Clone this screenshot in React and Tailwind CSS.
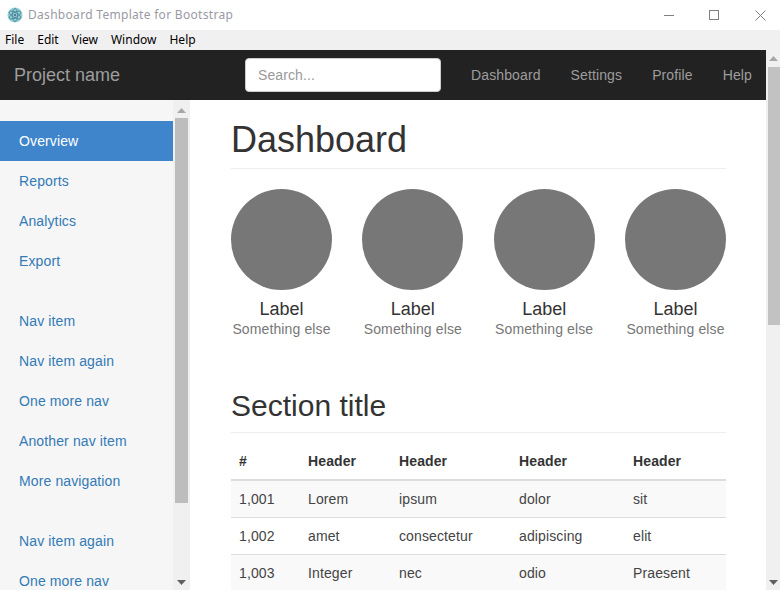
import React from 'react';

const navLinks = ['Dashboard', 'Settings', 'Profile', 'Help'];
const sideGroups = [
  ['Reports', 'Analytics', 'Export'],
  ['Nav item', 'Nav item again', 'One more nav', 'Another nav item', 'More navigation'],
  ['Nav item again', 'One more nav'],
];
const rows = [
  ['1,001', 'Lorem', 'ipsum', 'dolor', 'sit'],
  ['1,002', 'amet', 'consectetur', 'adipiscing', 'elit'],
  ['1,003', 'Integer', 'nec', 'odio', 'Praesent'],
];
const cols = ['w-[77px] pl-2', 'w-[91px]', 'w-[120px]', 'w-[114px]', 'flex-1'];
const font = { fontFamily: '"Liberation Sans", Arial, sans-serif' };

const AppIcon = () => (
  <svg width="16" height="16" viewBox="0 0 16 16" fill="none">
    <circle cx="8" cy="8" r="7.5" fill="#8fcfd6" />
    <ellipse cx="8" cy="8" rx="6.5" ry="2.6" stroke="#4d7f96" strokeWidth="0.8" transform="rotate(30 8 8)" />
    <ellipse cx="8" cy="8" rx="6.5" ry="2.6" stroke="#4d7f96" strokeWidth="0.8" transform="rotate(90 8 8)" />
    <ellipse cx="8" cy="8" rx="6.5" ry="2.6" stroke="#4d7f96" strokeWidth="0.8" transform="rotate(150 8 8)" />
    <circle cx="8" cy="8" r="1.2" fill="#4d7f96" />
  </svg>
);

// window buttons, 1px strokes on the pixel grid
const WinMin = () => (
  <svg width="10" height="10" viewBox="0 0 10 10" className="mr-[35px]">
    <path d="M0 5.5 H10" stroke="#808080" />
  </svg>
);
const WinMax = () => (
  <svg width="10" height="10" viewBox="0 0 10 10" className="mr-[36px]">
    <rect x="0.5" y="0.5" width="9" height="9" fill="none" stroke="#808080" />
  </svg>
);
const WinClose = () => (
  <svg width="11" height="11" viewBox="0 0 11 11" className="mr-[14px]">
    <path d="M0.5 0.5 L10.5 10.5 M10.5 0.5 L0.5 10.5" stroke="#808080" />
  </svg>
);

const Arrow = ({ up, className }) => (
  <svg width="9" height="5" viewBox="0 0 9 5" className={className}>
    <path d={up ? 'M0 5 L4.5 0 L9 5 Z' : 'M0 0 L9 0 L4.5 5 Z'} fill="currentColor" />
  </svg>
);

const Placeholder = () => (
  <div className="w-[101px] flex flex-col items-center">
    <div className="w-[101px] h-[101px] shrink-0 rounded-full bg-[#777777]" />
    <div className="mt-[7px] text-[18px] leading-[24px] text-[#333333]">Label</div>
    <div className="text-[14px] leading-[16px] tracking-[0.12px] whitespace-nowrap text-[#777777]">Something else</div>
  </div>
);

export default function App() {
  return (
    <div className="w-[780px] h-[590px] overflow-hidden flex flex-col bg-white" style={font}>
      {/* window title */}
      <div className="h-[30px] shrink-0 flex items-center pl-[7px] bg-white">
        <AppIcon />
        <span className="ml-[5px] text-[12px] tracking-[0.3px] text-[#9a9aa4]" style={{ fontFamily: '"Noto Sans", sans-serif' }}>
          Dashboard Template for Bootstrap
        </span>
        <div className="ml-auto flex items-center">
          <WinMin />
          <WinMax />
          <WinClose />
        </div>
      </div>

      {/* menu bar */}
      <div className="h-[20px] shrink-0 flex items-center gap-[13px] pl-[5px] bg-[#f0f0f0] text-[12px] text-black" style={{ fontFamily: '"Noto Sans", sans-serif' }}>
        {['File', 'Edit', 'View', 'Window', 'Help'].map((m) => (
          <span key={m}>{m}</span>
        ))}
      </div>

      <div className="flex-1 flex min-h-0">
        <div className="w-[766px] flex flex-col">
          {/* navbar */}
          <div className="h-[50px] shrink-0 bg-[#222222] flex items-center pl-[14px]">
            <span className="text-[18px] text-[#9d9d9d] w-[231px]">Project name</span>
            <div className="w-[196px] h-[34px] bg-white rounded border border-[#cccccc] flex items-center pl-3 text-[14px] tracking-[0.1px] text-[#999999]">
              Search...
            </div>
            <div className="flex ml-[30px] gap-[30px] text-[14px] tracking-[0.12px] text-[#9d9d9d]">
              {navLinks.map((l) => (
                <span key={l}>{l}</span>
              ))}
            </div>
          </div>

          <div className="flex-1 flex min-h-0">
            {/* sidebar */}
            <div className="w-[190px] shrink-0 flex bg-[#f6f6f6]">
              <div className="w-[173px] pt-[21px] text-[14px] tracking-[0.12px] text-[#337ab7] overflow-hidden">
                <div className="h-[40px] flex items-center pl-[19px] bg-[#3f85cb] text-white">Overview</div>
                {sideGroups.map((group, i) => (
                  <div key={i} className="mb-[20px]">
                    {group.map((item) => (
                      <div key={item} className="h-[40px] flex items-center pl-[19px]">{item}</div>
                    ))}
                  </div>
                ))}
              </div>
              <div className="w-[17px] bg-[#f0f0f0] flex flex-col items-center text-[#606060]">
                <Arrow up className="mt-[8px] text-[#a8a8a8]" />
                <div className="w-[13px] h-[385px] mt-[5px] bg-[#bdbdbd]" />
                <Arrow className="mt-auto mb-[5px]" />
              </div>
            </div>

            {/* main content */}
            <div className="flex-1 min-w-0 pl-[41px] pr-[40px] pt-[20px] overflow-hidden text-[#333333]">
              <h1 className="text-[36px] leading-[40px] pb-[8px] border-b border-[#eeeeee]">Dashboard</h1>
              <div className="flex justify-between mt-[20px]">
                <Placeholder />
                <Placeholder />
                <Placeholder />
                <Placeholder />
              </div>
              <h2 className="text-[30px] leading-[33px] mt-[52px] pb-[10px] border-b border-[#eeeeee]">Section title</h2>
              <div className="mt-[10px] text-[14px] tracking-[0.12px]">
                <div className="flex h-[38px] items-center font-bold border-b-2 border-[#dddddd]">
                  {['#', 'Header', 'Header', 'Header', 'Header'].map((h, i) => (
                    <div key={i} className={cols[i]}>{h}</div>
                  ))}
                </div>
                {rows.map((r, i) => (
                  <div key={i} className={`flex h-[37px] items-center border-b border-[#dddddd] text-[#444444] ${i % 2 === 0 ? 'bg-[#f9f9f9]' : 'bg-white'}`}>
                    {r.map((c, j) => (
                      <div key={j} className={cols[j]}>{c}</div>
                    ))}
                  </div>
                ))}
              </div>
            </div>
          </div>
        </div>

        {/* page scrollbar */}
        <div className="w-[14px] bg-[#f0f0f0] flex flex-col items-center text-[#606060]">
          <Arrow up className="mt-[6px] text-[#a8a8a8]" />
          <div className="w-[12px] h-[258px] mt-[6px] ml-[2px] bg-[#c2c2c2]" />
          <Arrow className="mt-auto mb-[5px]" />
        </div>
      </div>
    </div>
  );
}
